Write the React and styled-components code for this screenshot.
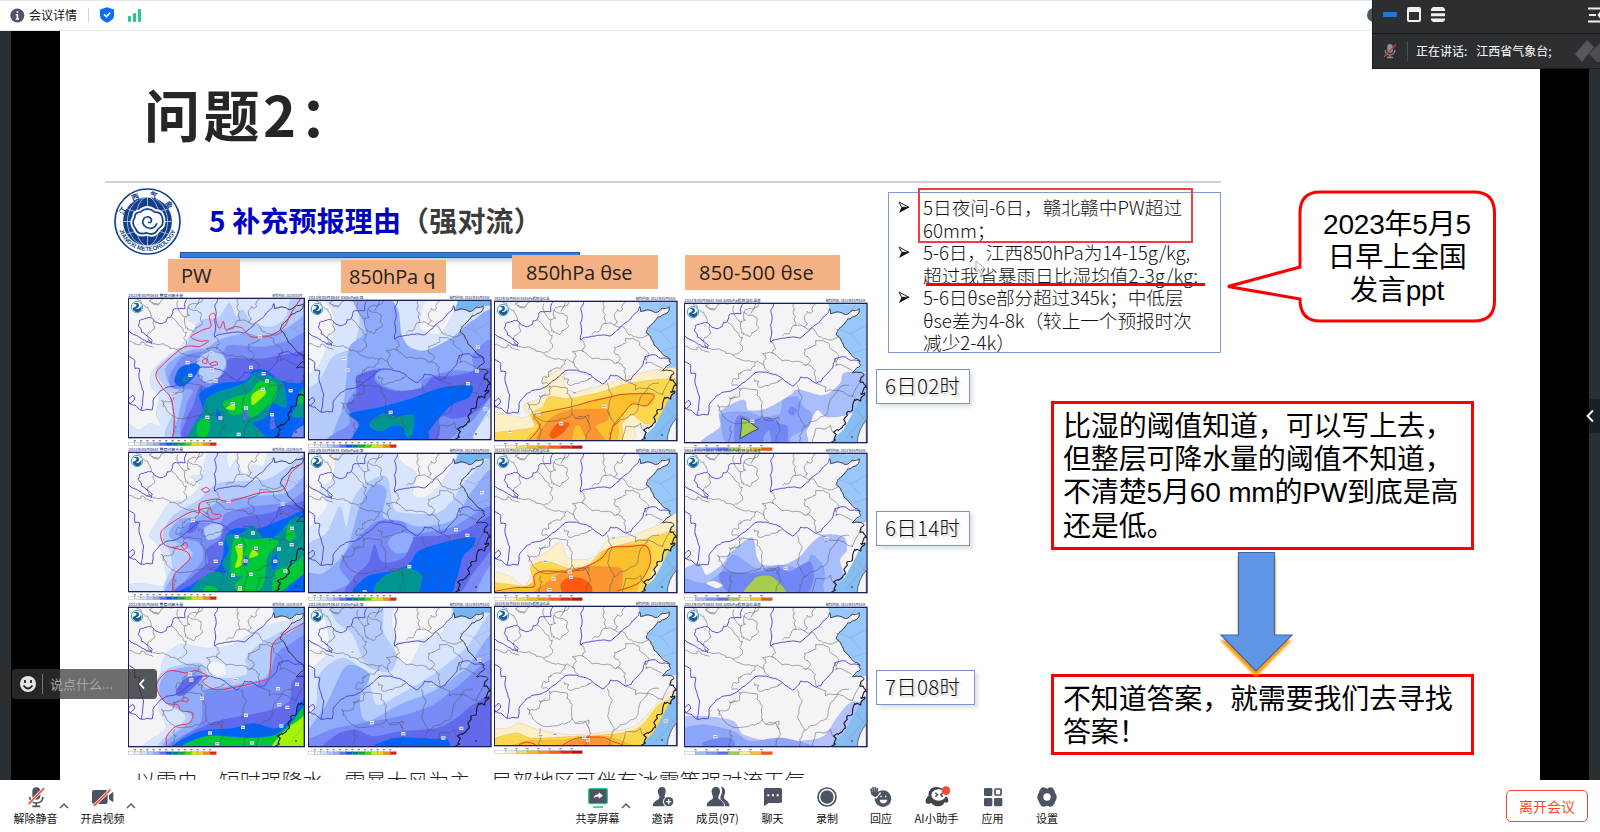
import React from 'react';
import styled, { createGlobalStyle } from 'styled-components';

const CJK = '"Noto Sans CJK SC", sans-serif';
const ARIAL = '"Liberation Sans", "Noto Sans CJK SC", sans-serif';

const Global = createGlobalStyle`
  * { box-sizing: border-box; }
  html, body { margin: 0; padding: 0; }
  body { width: 1600px; height: 832px; overflow: hidden; background: #fff; font-family: ${CJK}; }
  svg { display: block; }
`;

const Window = styled.div`
  width: 1600px;
  height: 832px;
  display: flex;
  flex-direction: column;
  position: relative;
  overflow: hidden;
  background: #fff;
`;

/* ---------- top bar ---------- */
const TopBar = styled.header`
  height: 31px;
  flex: none;
  border-top: 1px solid #e6e8ef;
  border-bottom: 1px solid #e6e8f1;
  display: flex;
  align-items: center;
  padding: 0 0 1px 10px;
  font-size: 12px;
  color: #111;
`;
const TopLabel = styled.span`
  margin-left: 4px;
  line-height: 16px;
`;
const TopDivider = styled.i`
  width: 1px;
  height: 14px;
  background: #d4d7df;
  margin: 0 11px;
`;
const Bars = styled.div`
  display: flex;
  align-items: flex-end;
  gap: 2px;
  height: 13px;
  margin-left: 14px;
`;
const Bar = styled.i`
  width: 3px;
  height: ${(p) => p.$h}px;
  background: #26c98c;
  border-radius: 1px;
`;
const HiddenInfo = styled.i`
  width: 14px;
  height: 14px;
  border-radius: 50%;
  background: #4e5566;
  margin-left: 1226px;
`;

/* ---------- stage ---------- */
const Stage = styled.main`
  height: 749px;
  flex: none;
  display: flex;
  background: #000;
  border-left: 11px solid #2b2f32;
  border-right: 11px solid #2b2f32;
  padding: 0 49px;
`;
const Slide = styled.section`
  width: 1480px;
  height: 749px;
  background: #fff;
  overflow: hidden;
`;
const SlideTitle = styled.h1`
  margin: 0;
  height: 150px;
  padding: 40px 0 0 84px;
  font: 700 56px/84px ${CJK};
  letter-spacing: 3.5px;
  color: #262626;
  white-space: nowrap;
`;
const Rule = styled.div`
  width: 1116px;
  height: 2px;
  margin-left: 45px;
  background: #d2d2d2;
`;
const Body = styled.div`
  display: flex;
`;
const Left = styled.div`
  width: 807px;
  flex: none;
`;
const Head = styled.div`
  display: flex;
  height: 67px;
  margin: 5px 0 0 54px;
`;
const HeadText = styled.div`
  display: flex;
  flex-direction: column;
`;
const Heading = styled.h2`
  margin: 12px 0 0 28px;
  font: 700 28px/40px ${CJK};
  letter-spacing: 0.15px;
  color: #0000c4;
  white-space: nowrap;
`;
const HeadingNote = styled.span`
  color: #3c3c3c;
`;
const BlueBar = styled.div`
  width: 400px;
  height: 6px;
  margin: auto 0 -3px -1px;
  flex: none;
  background: #2c7fdc;
  border: 1px solid #2f5597;
  box-shadow: 0 3px 4px rgba(90, 100, 130, 0.35);
`;
const Tags = styled.div`
  display: flex;
  align-items: flex-start;
  height: 38px;
  position: relative;
`;
const Tag = styled.div`
  width: ${(p) => p.$w}px;
  height: ${(p) => p.$h}px;
  margin: ${(p) => p.$top}px 0 0 ${(p) => p.$left}px;
  padding-left: ${(p) => p.$pad}px;
  background: #f4b183;
  color: #222;
  font: 400 20px/${(p) => p.$h + 1}px "Open Sans", ${CJK};
  letter-spacing: ${(p) => p.$ls || 0}px;
  white-space: nowrap;
`;
const Maps = styled.div`
  display: grid;
  grid-template-columns: 180px 186px 189px 184px;
  grid-template-rows: 154.4px 154.9px 154px;
  padding-left: 68.4px;
`;
const MapCell = styled.div`
  margin-top: ${(p) => p.$dy}px;
  margin-left: ${(p) => p.$dx || 0}px;
`;
const Caption = styled.p`
  margin: 10px 0 0 75px;
  font: 300 21px/28px ${CJK};
  letter-spacing: -0.05px;
  color: #222;
  white-space: nowrap;
`;

const Right = styled.div`
  width: 673px;
  flex: none;
`;
const TopRow = styled.div`
  display: flex;
  margin: 9px 0 0 21px;
`;
const Notes = styled.ul`
  position: relative;
  width: 333px;
  height: 161px;
  margin: 0;
  padding: 3px 0 0 34px;
  border: 1px solid #7f9bd3;
  list-style: none;
  font: 300 18.7px/22.5px ${CJK};
  color: #111;
`;
const Note = styled.li`
  position: relative;
  white-space: nowrap;
`;
const NoteLine = styled.div`
  height: 22.5px;
  letter-spacing: ${(p) => p.$ls || 0}px;
`;
const Bullet = styled.svg`
  position: absolute;
  left: -25px;
  top: 5px;
`;
const RedFrame = styled.div`
  position: absolute;
  left: 29px;
  top: -5px;
  width: 275px;
  height: 55px;
  border: 2px solid #ef3e3e;
`;
const RedLine = styled.div`
  position: absolute;
  left: 37px;
  top: 90px;
  width: 279px;
  height: 3px;
  background: #fb0000;
`;
const Pointer = styled.svg`
  position: absolute;
  left: 86px;
  top: 67px;
`;
const Callout = styled.div`
  position: relative;
  width: 273px;
  height: 134px;
  margin: -3px 0 0 3px;
  padding: 19px 3px 0 76px;
  font: 400 28px/33.2px ${ARIAL};
  letter-spacing: -0.2px;
  color: #000;
  text-align: center;
  white-space: nowrap;
`;
const CalloutShape = styled.svg`
  position: absolute;
  left: 0;
  top: 0;
`;
const CalloutLine = styled.div`
  position: relative;
`;
const LowerRow = styled.div`
  display: flex;
  margin-left: 9px;
`;
const Times = styled.div`
  width: 175px;
  padding-top: 16px;
`;
const Time = styled.div`
  width: ${(p) => p.$w}px;
  height: 35px;
  margin-bottom: ${(p) => p.$gap}px;
  padding-left: 8px;
  border: 1px solid #7793d0;
  background: #fff;
  box-shadow: 3px 3px 4px rgba(120, 120, 120, 0.22);
  text-shadow: 2px 2px 2px rgba(120, 120, 120, 0.35);
  font: 300 20.5px/31px ${CJK};
  letter-spacing: 0.3px;
  color: #111;
  white-space: nowrap;
`;
const Conclusions = styled.div`
  padding-top: 48px;
`;
const RedBox = styled.div`
  width: 423px;
  height: ${(p) => p.$h}px;
  border: 3px solid #fb0000;
  padding: 6px 0 0 9px;
  font: 400 28px/33.2px ${ARIAL};
  letter-spacing: -0.17px;
  color: #000;
  white-space: nowrap;
`;
const ArrowSvg = styled.svg`
  margin-left: 163px;
  overflow: visible;
`;

/* ---------- overlays ---------- */
const Speaker = styled.aside`
  position: absolute;
  right: 0;
  top: 0;
  width: 228px;
  height: 69px;
  background: #2b2f32;
  border-left: 1px solid #1b1d1f;
  border-bottom: 1px solid #1b1d1f;
  overflow: hidden;
`;
const SpeakerTop = styled.div`
  height: 34px;
  display: flex;
  align-items: center;
  padding: 0 0 4px 10px;
  gap: 10px;
  border-bottom: 1px solid #16181a;
`;
const Dash = styled.i`
  width: 14px;
  height: 5px;
  border-radius: 1px;
  background: #1b78dc;
`;
const SpeakerRow = styled.div`
  display: flex;
  align-items: center;
  height: 33px;
  padding-left: 10px;
  font-size: 12px;
  color: #fff;
  white-space: nowrap;
`;
const SpeakerDivider = styled.i`
  width: 1px;
  height: 20px;
  background: #4c5054;
  margin: 0 8px 0 10px;
`;
const SpeakerName = styled.span`
  margin-left: 9px;
  width: 88px;
`;
const PushRight = styled.div`
  margin-left: auto;
`;
const ChatBar = styled.div`
  position: absolute;
  left: 12px;
  top: 669px;
  width: 145px;
  height: 30px;
  border-radius: 4px;
  display: flex;
  align-items: center;
  background: rgba(50, 52, 54, 0.72);
  overflow: hidden;
  color: #a8a8a8;
  font-size: 13px;
`;
const ChatInput = styled.div`
  width: 85px;
  flex: none;
  border-left: 1px solid #77797b;
  height: 20px;
  line-height: 20px;
  margin-left: -2px;
  padding-left: 7px;
  white-space: nowrap;
`;
const ChatToggle = styled.div`
  flex: 1;
  height: 30px;
  display: flex;
  align-items: center;
  justify-content: center;
  padding-right: 2px;
  border-left: 1px solid rgba(150, 150, 150, 0.5);
  background: rgba(40, 42, 44, 0.3);
`;
const SideTab = styled.div`
  position: absolute;
  right: 0;
  top: 399px;
  width: 11px;
  height: 34px;
  background: #1d2022;
`;
const SideChevron = styled.svg`
  margin: 10px 0 0 -4px;
  overflow: visible;
`;

/* ---------- toolbar ---------- */
const Toolbar = styled.footer`
  height: 52px;
  flex: none;
  display: flex;
  background: #fff;
  padding-left: 2px;
`;
const Tool = styled.div`
  position: relative;
  width: ${(p) => p.$w}px;
  flex: none;
  display: flex;
  flex-direction: column;
  align-items: center;
  padding-top: 6px;
  margin-left: ${(p) => p.$ml || 0}px;
`;
const ToolLabel = styled.span`
  margin-top: 2px;
  font: 400 ${(p) => (p.$latin ? 11.3 : 11)}px/16px ${CJK};
  color: #111;
  white-space: nowrap;
`;
const Caret = styled.svg`
  position: absolute;
  left: calc(50% + 23px);
  top: 22px;
`;
const Leave = styled.button`
  width: 82px;
  height: 32px;
  margin: 10px 12px 0 auto;
  padding: 0;
  border: 1px solid #ee4a33;
  border-radius: 5px;
  background: #fff;
  color: #fa4a2e;
  font: 400 14px/28px ${CJK};
`;

/* ---------- weather maps ---------- */
const rand = (seed) => {
  let s = seed;
  return () => {
    s = (s * 16807) % 2147483647;
    return s / 2147483647 - 0.5;
  };
};

// Subdivides a polyline and shakes the midpoints, so borders look surveyed.
const rough = (pts, amp, seed = 7) => {
  const r = rand(seed * 7919);
  let out = pts;
  for (let k = 0; k < 2; k += 1) {
    const next = [out[0]];
    for (let i = 1; i < out.length; i += 1) {
      const [x0, y0] = out[i - 1];
      const [x1, y1] = out[i];
      const a = amp / (k + 1);
      next.push([(x0 + x1) / 2 + r() * a, (y0 + y1) / 2 + r() * a], out[i]);
    }
    out = next;
  }
  return 'M' + out.map((p) => p[0].toFixed(1) + ' ' + p[1].toFixed(1)).join('L');
};

const smooth = (pts, closed) => {
  const n = pts.length;
  const at = (i) => (closed ? pts[(i + n) % n] : pts[Math.max(0, Math.min(n - 1, i))]);
  let d = `M${pts[0].join(' ')}`;
  for (let i = 0; i < (closed ? n : n - 1); i += 1) {
    const [a, b, c, e] = [at(i - 1), at(i), at(i + 1), at(i + 2)];
    d += `C${b[0] + (c[0] - a[0]) / 7} ${b[1] + (c[1] - a[1]) / 7} ${c[0] - (e[0] - b[0]) / 7} ${c[1] - (e[1] - b[1]) / 7} ${c[0]} ${c[1]}`;
  }
  return d + (closed ? 'Z' : '');
};

const P = (s) => s.split(' ').map((t) => t.split(',').map(Number));

const rivers = [
  '192,66 188,72 186,95 160,95 150,100 145,118 133,122 128,135 110,140 92,130 85,122 65,125 50,130 46,145 55,165 75,178 88,190 86,200 70,195 55,185 40,175 16,160',
  '284,66 275,85 280,110 274,130 278,150 275,180 290,172 320,168 340,165 365,168 380,155 395,140 415,125 430,108 445,95 452,80',
  '16,238 35,250 36,275 50,275 50,310 62,345 58,385 55,400 88,398 90,370 100,355 115,340 135,330 160,325 185,308 210,290 228,272 262,270 290,278 310,290 340,312 355,300 365,285 385,287 410,303 425,300 440,280 462,255 468,230 500,225 520,235 545,238',
  '16,365 30,355 35,368 22,380 16,378',
  '16,380 36,384 55,400',
].map((s, i) => rough(P(s), 5, 11 + i));

const borders = [
  '40,66 55,85 75,95 85,120', '85,75 110,80 115,70 150,66', '88,66 85,75 108,84',
  '145,118 165,140 180,155 190,165 183,185 188,205 165,220 140,210 120,200 90,200 70,195',
  '85,195 75,170 95,155 92,130', '16,190 35,200 60,195 75,205 90,212',
  '165,70 165,95 185,120 188,155', '185,120 200,115 195,90 215,100 235,115 238,140 220,150 210,165 195,155 190,150',
  '240,66 215,95', '230,66 222,82 195,90', '345,66 342,85 350,105 348,130 330,155 310,162',
  '348,130 375,135 385,125 375,105 385,90 400,85 410,66', '375,135 400,140 420,165 440,170 478,165',
  '275,180 290,200 285,215 300,228 330,235 350,238 380,250 400,255 405,270 412,300',
  '285,215 250,215 262,230 255,250 270,270', '165,220 190,235 230,240 255,250',
  '230,240 215,265 185,270 180,290 165,290 160,310 180,315 185,325',
  '380,250 395,235 375,215 385,200 405,190 410,175 440,180 455,200 475,215 470,240',
  '225,290 240,300 235,310 270,310 300,295 310,290',
  '180,325 205,320 235,325 240,345 250,360 248,395 262,415 300,405 300,430',
  '170,340 150,370 135,375 115,370 120,390', '355,310 370,345 360,380 365,410 375,435 420,410 440,400 455,350 475,325 510,310',
  '475,325 500,335 520,345 550,290', '250,400 220,415 170,425 130,400 120,380', '150,480 160,450 155,430',
  '262,415 290,410 305,445 290,480', '375,435 362,460 365,482', '185,325 178,345 150,345', '400,480 410,440 455,430 470,455',
  '468,230 470,250 500,255 520,265', '410,303 430,310 440,330 475,325',
].map((s, i) => rough(P(s), 13, 31 + i));

const coast = rough(P('452,80 455,95 480,90 500,98 520,85 540,80 538,95 520,105 500,120 480,140 472,158 485,170 495,195 515,215 540,235 545,250 520,272 540,272 555,280'), 7, 91);
const coastSouth = rough(P('555,280 552,300 557,315 545,335 548,345 530,355 520,385 505,400 498,425 478,445 470,460 450,482'), 22, 97);
const seaNorth = rough(P('448,66 562,66 562,270 520,272 545,250 540,235 515,215 495,195 485,170 472,158 480,140 500,120 520,105 538,95 540,80 520,85 500,98 480,90 455,95 452,80'), 2, 3) + 'Z';
const seaSouth = 'M562 330L545 345 520 395 495 440 470 465 462 482H562Z';

const captions = ['整层可降水量', '850hPa比湿', '850hPa假相当位温', '850-500hPa假相当位温差'];
const scales = [
  ['#fff', '#e4edfe', '#cfdefd', '#b2c8fc', '#8fa9fb', '#6371ee', '#0057f0', '#00827c', '#00a848', '#40d800', '#c8f000', '#ffd000', '#f88a00', '#e82010'],
  ['#fff', '#fbf2c8', '#fdd94a', '#fbb524', '#fb8a26', '#fb5a10', '#e02a10', '#c80a10'],
  ['#fff', '#a5bcfc', '#7a94f8', '#5a6fe8', '#a0c850', '#f0f0a0', '#f8c030', '#f05a10'],
];

const pale = '#d9e5fd';
const light = '#b6ccfc';
const mid = '#8fabfb';
const deep = '#788bf7';
const violet = '#6169ec';
const blue = '#0063f8';
const teal = '#00968f';
const green = '#00c836';
const lime = '#a2f400';
const cream = '#fdf0c6';
const yellow = '#fdd74e';
const amber = '#fbc02e';
const orange = '#fb9630';
const fire = '#fb5a10';
const grey = '#f4f4f7';

const maps = [
  {
    o: [27, 55], k: 0, dy: 0,
    f: [
      [pale, '215,50 200,110 230,140 200,180 170,210 130,240 95,280 95,320 120,350 110,400 125,440 90,430 60,450 20,430 20,490 590,490 590,40 230,40'],
      [light, '300,110 250,120 215,160 200,200 150,230 110,270 130,310 150,350 160,400 165,490 590,490 590,40 520,50 500,110 460,140 400,130 370,90 350,110 330,70'],
      [mid, '590,120 500,145 430,170 380,160 300,180 260,205 200,215 140,260 150,310 190,340 180,400 190,490 590,490'],
      [deep, '590,170 500,185 430,200 330,195 310,215 250,215 190,230 150,290 160,325 220,330 200,380 210,490 590,490'],
      [violet, '590,220 540,215 430,235 330,235 320,270 270,320 240,320 220,380 200,420 215,490 590,490'],
      [light, '235,235 270,215 310,225 320,255 300,290 270,310 245,295 235,265'],
      [blue, '165,305 180,265 220,250 242,260 225,290 190,320'],
      [blue, '240,340 300,310 380,300 400,270 440,270 480,300 540,310 555,300 590,340 590,490 240,490 215,470 225,430 250,390'],
      [teal, '250,400 260,360 300,335 350,320 390,300 400,280 440,285 490,310 500,380 460,370 440,410 400,430 420,450 430,490 215,490 220,440'],
      [teal, '590,310 545,330 530,380 520,410 590,400'],
      [green, '310,370 350,350 390,340 420,305 470,310 465,360 440,380 400,412 370,400 340,405'],
      [green, '238,475 235,430 265,415 272,440 258,475'], [green, '590,340 555,330 540,370 590,380'],
      [lime, '398,375 398,345 430,325 440,340 415,365'], [lime, '320,385 345,370 345,390'],
      [teal, '188,300 205,288 212,292 198,306'], [blue, '290,410 292,385 305,400 300,425'], [violet, '372,415 376,385 385,400 384,418'], [violet, '452,445 458,400 468,440'],
      [deep, '520,480 530,450 580,430 580,490'],
    ],
    red: ['160,472 165,420 155,355 130,325 110,290 120,265 180,210 210,198 240,200 268,183 240,183 215,170 250,150 275,140 270,110 285,100 292,130 302,145 312,124 320,150 345,140 370,145 395,170 450,168 495,140 515,100 545,55', '250,240 262,236 262,250 250,248 250,240', '272,250 290,245 294,254 276,256 272,250'],
    n: '276,219 205,248 213,286 278,270 289,303 160,345 395,262 433,281 443,303 431,328 340,371 380,384 264,412 303,414 458,404 514,332 422,170 358,463',
  },
  {
    o: [566, 60], k: 1, dy: 2, bg: pale,
    f: [
      [grey, '550,50 605,50 640,100 645,150 620,210 600,250 570,280 550,260'], [grey, '925,50 1010,50 1000,100 960,160 905,150 900,120'],
      [light, '640,50 700,50 720,120 700,200 640,230 600,300 550,350 550,490 680,490 760,400 800,250 760,50'],
      [mid, '700,50 800,50 835,90 845,160 870,200 920,210 1000,170 1060,120 1130,110 1130,490 690,490 640,470 670,380 680,300 690,200 740,150'],
      [deep, '1130,190 1060,220 1060,270 1000,270 930,290 880,310 830,330 790,300 780,265 712,285 712,320 680,375 690,430 640,490 1130,490'],
      [mid, '765,285 800,268 860,270 905,295 900,325 840,330 790,315'],
      [violet, '680,375 710,350 712,290 770,268 765,300 800,325 850,332 910,320 940,290 1010,285 1130,262 1130,330 1060,400 1000,415 960,410 940,490 700,490 718,440'],
      [blue, '690,400 780,380 870,355 970,320 1055,315 1050,350 1000,372 970,400 930,450 910,490 708,490 718,430'],
      [teal, '750,430 790,400 830,410 880,405 880,450 865,474 850,440 820,435 790,450 765,448'],
      [mid, '1130,340 1090,380 1060,420 1010,460 990,490 1130,490'], [pale, '1130,360 1100,400 1060,470 1090,490 1130,440'],
    ], n: '673,234 684,269 1045,310 813,396 1075,200 1072,272 1097,386',
  },
  {
    o: [16, 64], k: 2, dy: 3, sea: 1,
    f: [
      [cream, '10,400 60,405 105,412 150,395 110,395 110,370 170,350 160,310 180,285 225,268 235,320 260,335 360,310 430,285 570,266 570,370 520,440 490,440 440,440 400,490 0,490'],
      [grey, '225,285 280,280 320,300 300,325 255,335 228,320'],
      [yellow, '0,462 80,450 135,440 125,400 160,380 180,350 240,355 340,335 420,310 570,298 570,365 480,432 430,405 400,430 370,490 0,490'],
      [amber, '135,410 250,385 300,365 400,345 490,340 485,375 430,370 390,420 365,490 120,490 150,440'],
      [orange, '150,490 180,420 250,390 355,390 355,420 320,440 340,490'], [fire, '182,465 205,432 240,430 225,455 195,475'],
      [amber, '250,490 255,445 270,435 285,460 290,490'],
    ],
    red: ['120,482 152,440 135,410 150,400 250,380 300,365 360,352 400,343 490,342 488,360 470,378 430,372 400,405 372,440 362,482'], n: '148,401 217,431 346,379 63,454 257,338',
  },
  {
    o: [583, 69], k: 3, dy: 5, sea: 1,
    f: [
      ['#a9befc', '640,495 690,440 690,395 760,358 775,390 830,385 900,345 925,328 1000,345 1050,310 1060,280 1100,275 1150,290 1150,350 1080,400 1010,410 980,390 950,450 930,495'],
      ['#8ca6fb', '720,495 695,430 700,400 770,395 820,410 870,400 880,360 920,350 940,380 965,400 955,440 900,470 890,495'],
      ['#7187f6', '740,495 735,430 750,405 790,420 830,410 870,430 892,440 888,495 850,495 838,450 820,470 815,495'],
      ['#7187f6', '895,395 905,380 920,390 908,405'],
    ], tri: 1, n: '787,423',
  },
  {
    o: [27, 38], k: 0, dy: 0,
    f: [
      [pale, '290,30 250,100 215,110 240,140 200,180 150,190 110,250 90,290 120,320 140,400 135,440 60,430 20,440 20,470 590,470 590,30'],
      [grey, '330,30 440,30 430,80 400,75 375,110 350,60 330,90'],
      [light, '590,50 510,80 440,120 300,130 240,180 160,230 130,290 150,330 160,380 160,470 590,470'],
      [mid, '590,110 500,160 400,170 300,185 240,230 180,240 150,290 220,340 170,400 165,470 590,470'],
      [deep, '590,160 500,190 400,200 320,220 300,250 210,250 180,290 240,310 250,360 200,420 180,470 590,470'],
      [light, '255,265 290,250 310,260 300,290 265,300'],
      [violet, '590,195 450,220 360,235 320,260 300,300 260,330 265,370 220,410 180,470 590,470'], [violet, '205,280 215,250 240,245 225,275'],
      [blue, '590,215 500,235 420,265 350,265 318,290 310,350 290,390 225,430 190,470 590,470'],
      [teal, '220,470 270,400 320,400 310,370 330,330 320,290 370,280 400,255 420,280 440,310 480,280 530,232 590,260 590,330 520,380 480,470'],
      [green, '370,410 335,400 345,300 400,300 450,295 480,310 445,350 430,440 380,460 345,440'], [green, '500,290 510,252 528,290 510,305'],
      [green, '590,320 520,375 470,395 460,460 490,450 590,370'], [green, '250,470 260,440 290,445 290,470'],
      [lime, '347,380 355,350 348,320 368,320 370,370 352,384'], [lime, '390,355 400,330 418,345'], [lime, '350,470 360,440 375,470'],
      [blue, '455,370 470,340 478,370 462,390'], [blue, '372,375 378,350 388,360 382,378'],
    ],
    red: ['160,455 165,405 210,360 200,335 140,318 125,295 130,270 180,235 220,215 240,220 242,190 290,178 330,185 420,160 490,150 515,100 550,70', '240,195 240,215 275,238 300,235 305,225 280,222 272,205 240,210', '246,150 262,143 270,153 256,158 246,150', '185,318 200,308 205,320 195,328 185,318'],
    n: '221,242 304,312 289,365 352,291 401,280 518,266 410,326 363,318 479,328 517,315 379,364 468,365 395,404 341,407 498,394 362,444 328,185 490,193',
  },
  {
    o: [566, 40], k: 1, dy: 0.6, bg: pale,
    f: [
      [grey, '550,30 640,30 640,110 600,150 625,190 600,230 550,260'], [grey, '840,30 1010,30 970,120 920,170 880,165 890,100 850,70'],
      [light, '550,330 620,280 660,200 680,260 700,180 740,130 800,110 820,200 850,220 950,220 1000,180 1040,120 1130,70 1130,470 550,470'],
      [mid, '550,400 610,400 680,330 720,200 760,135 800,150 790,230 850,245 900,260 1000,240 1060,150 1130,100 1130,470 550,470'],
      [deep, '660,380 690,320 770,245 850,245 880,280 1000,260 1130,205 1130,470 640,470 690,430'],
      [mid, '805,310 830,280 880,285 875,330 830,340'],
      [violet, '690,470 705,410 745,370 765,312 788,365 850,355 880,300 890,290 1010,280 1130,222 1130,300 1060,400 990,470'],
      [blue, '710,470 740,410 830,390 870,370 900,330 1000,300 1065,292 1060,320 1030,350 1010,420 970,470'],
      [teal, '765,440 800,405 860,385 900,400 905,420 885,470 780,470'], [mid, '1130,360 1090,410 1070,470 1130,470'],
    ], n: '1009,269 1043,286 869,380 1087,158 735,456',
  },
  {
    o: [16, 42], k: 2, dy: 0.6, sea: 1,
    f: [
      [cream, '0,400 60,410 105,440 130,400 125,370 170,340 215,308 235,355 290,360 325,345 360,300 440,285 520,250 570,223 570,330 510,400 470,470 0,470'],
      [yellow, '0,430 130,440 125,385 170,365 250,390 300,375 340,335 400,315 480,295 570,272 570,320 500,380 480,420 440,470 0,470'],
      [amber, '130,430 140,400 200,392 250,395 310,375 365,325 475,320 482,380 450,430 400,470 0,470 80,450'],
      [orange, '140,470 180,425 260,385 385,385 400,410 370,470'], [fire, '215,435 240,415 280,418 308,440 300,470 230,470'],
    ],
    red: ['18,456 80,445 135,442 135,410 165,395 240,398 300,378 340,355 365,325 420,322 472,320 484,370 450,430 385,455'], n: '194,419 246,414 181,451 242,398 373,296 169,366',
  },
  {
    o: [583, 40], k: 3, dy: 0.6, sea: 1,
    f: [
      ['#a9befc', '570,400 625,370 650,405 700,370 720,340 785,293 800,350 820,375 880,375 930,350 960,315 1000,285 1060,290 1070,330 1050,360 1060,420 1010,470 570,470'],
      ['#8ca6fb', '570,415 640,430 690,400 730,345 800,385 870,375 940,385 965,345 1000,380 1000,430 960,470 570,470'],
      ['#7187f6', '690,420 700,395 780,400 860,385 900,395 960,365 970,420 930,470 740,470'], [grey, '648,430 670,422 698,435 680,445'],
      ['#a8cc50', '760,470 790,420 810,408 850,412 890,470'],
    ], n: '887,385 1010,296',
  },
  {
    o: [387, 38], k: 0, dy: 0, sea: 1,
    f: [
      [pale, '490,200 540,150 620,160 700,150 780,100 880,75 950,60 950,470 450,470 500,400 480,350 480,320'],
      [grey, '640,200 675,210 680,240 650,245 625,220'],
      [light, '470,270 500,225 600,205 640,250 740,240 740,190 780,150 860,105 950,85 950,470 490,470 560,370 500,325'],
      [mid, '480,280 510,230 600,220 620,280 740,265 805,240 820,150 870,115 950,95 950,470 500,470 580,370 500,325'],
      [deep, '625,290 700,285 800,255 830,180 870,150 950,130 950,470 510,470 600,390 610,320'],
      [violet, '530,290 560,250 610,245 570,290 540,305'], [violet, '650,470 540,440 650,380 800,350 870,320 880,260 950,230 950,470'],
      [blue, '530,470 600,410 700,400 760,385 830,400 880,370 905,320 950,290 950,470'],
      [green, '555,470 620,425 750,430 830,420 880,380 905,345 950,310 950,470'], [lime, '815,470 860,405 900,375 950,340 950,470'],
    ],
    red: ['502,455 502,425 530,395 570,385 580,355 545,348 535,330 500,325 475,290 475,260 510,228 560,235 590,228 625,245 610,262 650,285 720,275 800,255 812,235 820,150 860,115 915,84', '545,315 555,308 568,315 560,322 545,315'],
    n: '572,238 576,256 608,311 836,282 840,330 864,338 893,269 740,362 731,398 632,415 654,447 758,445 846,394 708,255',
  },
  {
    o: [926, 38], k: 1, dy: 0, bg: pale, sea: 1,
    f: [
      [grey, '1190,30 1350,30 1330,110 1280,130 1190,140'], [grey, '910,30 970,60 990,160 960,200 910,220'], [grey, '1180,160 1260,140 1225,212'],
      [light, '1000,30 1140,30 1150,110 1190,180 1170,230 1100,210 1060,120 1010,80'],
      [light, '910,400 950,330 960,240 1030,190 1100,240 1130,330 1200,300 1300,240 1400,160 1490,60 1490,470 910,470'],
      [mid, '910,430 980,330 1040,215 1110,240 1080,310 1100,380 1200,330 1300,290 1400,220 1490,120 1490,470 910,470'],
      [deep, '920,470 980,410 1090,385 1200,365 1300,330 1380,270 1490,200 1490,470'],
      [violet, '1000,470 1010,420 1070,405 1120,425 1200,410 1310,400 1370,370 1420,330 1490,305 1490,470'],
      [blue, '1110,470 1180,430 1300,432 1345,435 1330,470'],
    ], n: '1117,384 1211,417 1331,430 1385,401 1059,172 1297,272 1438,196',
  },
  {
    o: [16, 35], k: 2, dy: -1.3, sea: 1,
    f: [
      [cream, '0,408 60,400 90,385 150,405 250,420 400,405 450,385 500,330 550,290 570,300 570,470 0,470'],
      [yellow, '0,438 80,415 130,430 250,425 400,415 460,390 510,330 570,320 570,470 0,470'],
      [amber, '70,470 110,440 230,435 280,427 350,425 400,440 440,470'], [orange, '220,470 250,440 300,428 350,435 380,470'],
    ],
    red: ['220,452 250,435 280,428 340,428 370,440 400,450', '90,450 115,442 140,450'], n: '155,423 285,428 198,419 530,379 297,436',
  },
  {
    o: [583, 38], k: 3, dy: -0.3, sea: 1,
    f: [
      ['#b4c2fc', '570,375 640,365 730,380 760,420 850,440 990,430 1040,370 1080,325 1120,330 1090,390 1040,440 1030,470 570,470'],
      ['#8ca6fb', '570,410 640,390 730,410 780,440 880,430 980,470 570,470'], ['#7187f6', '640,445 690,430 730,435 725,470 650,470'],
    ], n: '676,426',
  },
];

function WeatherMap({ m, i }) {
  const [ox, oy] = m.o;
  const w = m.k === 0 ? 528 : 548;
  const scale = m.k < 2 ? scales[0] : scales[m.k - 1];
  const bw = 264 / scale.length;
  const over = m.bg || m.k === 0;
  return (
    <svg width={(w + 4) / 3} height="154" viewBox={`-1 -16 ${w + 4} 462`}>
      <defs>
        <clipPath id={`frame${i}`}><rect width={w} height="418" /></clipPath>
      </defs>
      <g fontFamily='"Noto Sans CJK SC", sans-serif' fontSize="9.5" fontWeight="500" fill="#2c3c72">
        <text x="0" y="-5" textLength={m.k === 3 ? 230 : 165} lengthAdjust="spacingAndGlyphs">{`2023年05月06日 ${captions[m.k]}`}</text>
        <text x={w - (m.k === 0 ? 96 : 124)} y="-5" textLength={m.k === 0 ? 90 : 120} lengthAdjust="spacingAndGlyphs">{m.k === 0 ? '制作时间: 2023年05月' : '制作时间: 2023年05月05日'}</text>
      </g>
      <g clipPath={`url(#frame${i})`}>
        <rect width="548" height="418" fill={m.bg || grey} />
        {m.sea && !over && (
          <g transform="translate(-16 -64)" fill="#98c8fa"><path d={seaNorth} /></g>
        )}
        {over && <g transform="translate(-16 -64)" fill="#74b6f2"><path d="M448 64L562 64V80L540 80 520 85 500 98 480 90 455 95Z" /></g>}
        <g transform={`translate(${-ox} ${-oy})`}>
          {m.f.map(([c, s], j) => (
            <path key={j} d={smooth(P(s), true)} fill={c} stroke={over ? '#5fb4d8' : '#8a6a9a'} strokeWidth="1" strokeOpacity=".45" />
          ))}
          {m.tri && <path d="M755 413L772 420 805 445 780 458 750 475 754 440Z" fill="#a8cc50" stroke="#26345a" strokeWidth="2.5" />}
        </g>
        <g transform="translate(-16 -64)" fill="none" strokeLinejoin="round">
          {!over && (
            <>
              <path d={seaSouth} fill="#84bdf0" />
              <path d="M562 415Q538 440 534 484H562Z" fill={grey} stroke="#333" strokeWidth="2" />
            </>
          )}
          <path d="M470 140L515 155 562 130M515 155L545 190M500 120L530 66M520 215L562 200M562 400L500 470M530 380L562 420" stroke="#a86fc8" strokeWidth="1.4" opacity=".65" />
          {borders.map((d) => <path key={d} d={d} stroke="#54545e" strokeWidth="1.9" opacity=".8" />)}
          {rivers.map((d) => <path key={d} d={d} stroke="#4a40dc" strokeWidth="2.8" />)}
          <path d={coast} stroke="#23242e" strokeWidth="2.6" />
          <path d={coastSouth} stroke="#1a1b28" strokeWidth="3.4" />
          <path d="M519 462V468" stroke="#222" strokeWidth="3" />
        </g>
        <g transform={`translate(${-ox} ${-oy})`}>
          {(m.red || []).map((s) => (
            <path key={s} d={smooth(P(s), false)} fill="none" stroke={m.k === 0 ? '#ec2c4c' : '#f03a14'} strokeWidth="3" />
          ))}
          {P(m.n).map(([x, y]) => (
            <g key={`${x}-${y}`}>
              <rect x={x - 6} y={y - 5} width="12" height="10" fill="#f2f2fa" />
              <path d={`M${x - 3} ${y - 2}v4m3-4v4m3-4v4`} stroke="#4a4a86" strokeWidth="1.6" />
            </g>
          ))}
        </g>
        <circle cx="26" cy="26" r="17" fill="#f2fafc" stroke="#4fa6c4" strokeWidth="3" />
        <path d="M15 15Q30 10 32 20 33 29 22 30 33 36 39 22 43 38 28 42 14 40 13 29 25 25 25 19Z" fill="#1c5c94" />
      </g>
      <rect x="0" y="0" width={w} height="418" fill="none" stroke="#1f1f5c" strokeWidth="4" />
      <g>
        {scale.map((c, j) => (
          <g key={j}>
            <rect x={j * bw} y="433" width={bw} height="9" fill={c} stroke="#777" strokeWidth=".8" />
            {j > 0 && <rect x={j * bw - 3} y="425" width="7" height="4" fill="#8a8a92" />}
          </g>
        ))}
      </g>
    </svg>
  );
}

/* ---------- icons ---------- */
const INK = '#4c5363';
const Slash = (p) => (
  <g>
    <path d={p.d} stroke="#fff" strokeWidth="9" />
    <path d={p.d} stroke="#fa4b33" strokeWidth="5" strokeLinecap="round" />
  </g>
);

const icons = {
  mic: (
    <>
      <rect x="28" y="4" width="24" height="37" rx="12" fill={INK} />
      <path d="M20 33Q22 51 40 51T60 33" fill="none" stroke={INK} strokeWidth="5" />
      <path d="M40 51V60M28 61H52" stroke={INK} strokeWidth="5" />
      <Slash d="M18 53L62 8" />
    </>
  ),
  video: (
    <>
      <rect x="6" y="12" width="47" height="42" rx="6" fill={INK} />
      <path d="M57 27L70 17V49L57 40Z" fill={INK} />
      <Slash d="M13 58L60 12" />
    </>
  ),
  share: (
    <>
      <rect x="11" y="8" width="56" height="45" rx="4" fill={INK} stroke="#27cc8d" strokeWidth="4" />
      <path d="M26 37Q28 25 41 25V19L54 29 41 38V32Q32 31 26 37Z" fill="#fff" />
      <path d="M24 63H54" stroke="#27cc8d" strokeWidth="5" />
    </>
  ),
  invite: (
    <>
      <path d="M36 3C27 3 23 10 24 19 25 27 29 31 28 36 26 43 9 43 8 61H46L50 34 44 33Q43 29 46 24 51 3 36 3Z" fill={INK} />
      <circle cx="56" cy="47" r="17" fill="#fff" /><circle cx="56" cy="47" r="14" fill={INK} />
      <path d="M48 47H64M56 39V55" stroke="#fff" strokeWidth="4" />
    </>
  ),
  members: (
    <>
      <path d="M48 3C57 3 62 10 60 20 59 28 55 31 57 37 60 43 72 44 74 61H61Q59 48 47 41 44 33 48 27 55 12 48 3Z" fill={INK} />
      <path d="M32 3C23 3 19 10 20 19 21 27 25 31 24 36 22 43 5 43 5 61H58C57 43 42 43 40 36 39 31 43 27 45 19 46 8 41 3 32 3Z" fill={INK} />
    </>
  ),
  chat: (
    <>
      <path d="M17 6H62Q66 6 66 11V46Q66 51 61 51H26L12 61V11Q12 6 17 6Z" fill={INK} />
      <path d="M22 28H28M36 28H42M50 28H56" stroke="#fff" strokeWidth="6" />
    </>
  ),
  record: (
    <>
      <circle cx="39" cy="33" r="27" fill="none" stroke={INK} strokeWidth="5" />
      <circle cx="39" cy="33" r="20" fill={INK} />
    </>
  ),
  react: (
    <>
      <circle cx="45" cy="38" r="25" fill={INK} />
      <path d="M35 41H58Q56 52 46 52T35 41Z" fill="#fff" />
      <path d="M39 29V34M53 29V34" stroke="#fff" strokeWidth="4" />
      <path d="M10 20H28L34 22 24 34Q14 34 10 20Z" fill={INK} stroke="#fff" strokeWidth="7" />
      <path d="M9 9L12 24M15 5L17 22M22 5V21M28 8L27 25M33 19L26 28" stroke={INK} strokeWidth="5" strokeLinecap="round" />
      <path d="M10 20H28L32 23 24 33Q14 34 10 20Z" fill={INK} />
    </>
  ),
  ai: (
    <>
      <path d="M39 3C20 2 12 17 14 29Q3 37 5 50 15 57 21 50 28 61 44 61 58 60 61 49 74 53 73 42 73 34 64 31 67 6 39 3Z" fill="#42444a" />
      <ellipse cx="44" cy="27" rx="22" ry="17" fill="#fff" />
      <path d="M34 20L41 26 34 32M57 20L50 26 57 32" fill="none" stroke="#42444a" strokeWidth="4" />
      <circle cx="66" cy="14" r="13" fill="#fa4b33" />
    </>
  ),
  apps: (
    <>
      <rect x="12" y="6" width="25" height="24" rx="4" fill={INK} />
      <rect x="45" y="9" width="18" height="18" rx="2" fill="none" stroke={INK} strokeWidth="5" />
      <rect x="12" y="36" width="25" height="25" rx="4" fill={INK} />
      <rect x="42" y="36" width="25" height="25" rx="4" fill={INK} />
    </>
  ),
  settings: (
    <path
      fillRule="evenodd"
      fill={INK}
      d="M22 5Q31 2 35 6 39 9 43 6 47 2 56 5L62 16Q62 21 66 24 71 33 66 43 62 46 62 52L55 61Q46 64 42 60 39 58 36 60 31 64 22 61L16 51Q16 46 12 43 7 33 12 24 16 20 16 15ZM39 22A11 11 0 1 0 39 44 11 11 0 1 0 39 22Z"
    />
  ),
};

const tools = [
  { icon: 'mic', label: '解除静音', w: 67, caret: true },
  { icon: 'video', label: '开启视频', w: 67, caret: true },
  { icon: 'share', label: '共享屏幕', w: 75, caret: true, ml: 424 },
  { icon: 'invite', label: '邀请', w: 55 },
  { icon: 'members', label: '成员(97)', w: 55 },
  { icon: 'chat', label: '聊天', w: 55 },
  { icon: 'record', label: '录制', w: 54 },
  { icon: 'react', label: '回应', w: 54 },
  { icon: 'ai', label: 'AI小助手', w: 57 },
  { icon: 'apps', label: '应用', w: 55 },
  { icon: 'settings', label: '设置', w: 54 },
];

function ToolItem({ t }) {
  return (
    <Tool $w={t.w} $ml={t.ml}>
      <svg width="26" height="22" viewBox="0 0 78 66">{icons[t.icon]}</svg>
      <ToolLabel $latin={t.icon === 'members' || t.icon === 'ai'}>{t.label}</ToolLabel>
      {t.caret && (
        <Caret width="10" height="8" viewBox="0 0 10 8"><path d="M1 6L5 2 9 6" fill="none" stroke="#555b68" strokeWidth="1.5" /></Caret>
      )}
    </Tool>
  );
}

function Logo() {
  const c = '#123f8c';
  return (
    <svg width="67" height="67" viewBox="0 0 200 200">
      <defs>
        <path id="arcTop" d="M29 100A71 71 0 0 1 171 100" />
        <path id="arcLow" d="M12 100A88 88 0 0 0 188 100" />
      </defs>
      <circle cx="100" cy="100" r="97" fill="#fff" stroke={c} strokeWidth="5" />
      <circle cx="100" cy="100" r="73" fill={c} />
      <g fill="none" stroke="#dfe8f8" strokeWidth="2">
        <path d="M100 27V173M27 100H173M38 62Q100 90 162 62M38 138Q100 110 162 138" />
        <ellipse cx="100" cy="100" rx="36" ry="73" /><ellipse cx="100" cy="100" rx="60" ry="73" />
      </g>
      <path d="M78 72Q100 52 122 72 142 70 145 92 150 112 132 122 120 144 98 134 72 142 65 122 50 105 62 88 62 72 78 72Z" fill="#fff" stroke="#fff" strokeWidth="16" />
      <path d="M78 72Q100 52 122 72 142 70 145 92 150 112 132 122 120 144 98 134 72 142 65 122 50 105 62 88 62 72 78 72Z" fill="#fff" stroke={c} strokeWidth="5" />
      <path d="M128 105Q120 126 98 118 78 106 90 90 104 80 112 94 112 106 102 102" fill="none" stroke={c} strokeWidth="5" />
      <text fill={c} fontSize="23" fontWeight="700" fontFamily='"Noto Sans CJK SC"' letterSpacing="26"><textPath href="#arcTop" startOffset="16">江西气象</textPath></text>
      <text fill={c} fontSize="18" fontWeight="700" fontFamily='"Liberation Sans"'><textPath href="#arcLow" startOffset="26" textLength="222">JIANGXI METEOROLOGY</textPath></text>
    </svg>
  );
}

const BulletMark = () => (
  <Bullet width="12" height="13" viewBox="0 0 12 13">
    <path d="M1 1L11 6.3 3.6 6.3Z" fill="#fff" stroke="#222" strokeWidth="1" />
    <path d="M3.6 6.3H11.5L1 12Z" fill="#111" />
  </Bullet>
);

export default function App() {
  return (
    <Window>
      <Global />
      <TopBar>
        <svg width="15" height="15" viewBox="0 0 15 15">
          <circle cx="7.3" cy="7.5" r="7" fill="#4e5566" />
          <path d="M7.4 3.2V5M5.8 6.7H7.4V11M5.8 11H9" stroke="#fff" strokeWidth="1.6" fill="none" />
        </svg>
        <TopLabel>会议详情</TopLabel>
        <TopDivider />
        <svg width="14" height="16" viewBox="0 0 14 16">
          <path d="M7 0.3L14 2.6V8.5Q14 13 7 15.8 0 13 0 8.5V2.6Z" fill="#0a6cff" />
          <path d="M4 7.3L6.4 9.6 10.2 5.6" fill="none" stroke="#fff" strokeWidth="1.7" />
        </svg>
        <Bars><Bar $h={6} /><Bar $h={9} /><Bar $h={13} /></Bars>
        <HiddenInfo />
      </TopBar>

      <Stage>
        <Slide>
          <SlideTitle>问题2：</SlideTitle>
          <Rule />
          <Body>
            <Left>
              <Head>
                <Logo />
                <HeadText>
                  <Heading>5 补充预报理由<HeadingNote>（强对流）</HeadingNote></Heading>
                  <BlueBar />
                </HeadText>
              </Head>
              <Tags>
                <Tag $w={72} $h={33} $top={4} $left={108} $pad={13}>PW</Tag>
                <Tag $w={105} $h={33} $top={5} $left={101} $pad={8} $ls={-0.1}>850hPa q</Tag>
                <Tag $w={146} $h={34} $top={0} $left={66} $pad={14} $ls={-0.1}>850hPa θse</Tag>
                <Tag $w={155} $h={35} $top={0} $left={27} $pad={14} $ls={0.2}>850-500 θse</Tag>
              </Tags>
              <Maps>
                {maps.map((m, i) => (
                  <MapCell key={i} $dy={m.dy} $dx={m.k === 3 ? 0.3 : 0}><WeatherMap m={m} i={i} /></MapCell>
                ))}
              </Maps>
              <Caption>以雷电、短时强降水、雷暴大风为主，局部地区可伴有冰雹等强对流天气</Caption>
            </Left>
            <Right>
              <TopRow>
                <Notes>
                  <Note>
                    <BulletMark />
                    <NoteLine>5日夜间-6日，赣北赣中PW超过</NoteLine>
                    <NoteLine>60mm；</NoteLine>
                  </Note>
                  <Note>
                    <BulletMark />
                    <NoteLine $ls={-0.15}>5-6日，江西850hPa为14-15g/kg,</NoteLine>
                    <NoteLine>超过我省暴雨日比湿均值2-3g/kg;</NoteLine>
                  </Note>
                  <Note>
                    <BulletMark />
                    <NoteLine $ls={-0.15}>5-6日θse部分超过345k；中低层</NoteLine>
                    <NoteLine $ls={-0.1}>θse差为4-8k（较上一个预报时次</NoteLine>
                    <NoteLine>减少2-4k）</NoteLine>
                  </Note>
                  <RedFrame />
                  <RedLine />
                  <Pointer width="12" height="16" viewBox="0 0 12 16"><path d="M1 1V12L4 9.5 6 14 8 13 6.2 8.8H10Z" fill="#fff" stroke="#999" strokeWidth=".8" /></Pointer>
                </Notes>
                <Callout>
                  <CalloutShape width="273" height="134" viewBox="0 0 273 134">
                    <path d="M96 3H250Q270.500 3 270.500 24V112Q270.500 132 250 132H96Q76 132 76 110L76 110L4 97.500 76 78V24Q76 3 96 3Z" fill="#fff" stroke="#fb0000" strokeWidth="3" />
                  </CalloutShape>
                  <CalloutLine>2023年5月5</CalloutLine>
                  <CalloutLine>日早上全国</CalloutLine>
                  <CalloutLine>发言ppt</CalloutLine>
                </Callout>
              </TopRow>
              <LowerRow>
                <Times>
                  <Time $w={94} $gap={107}>6日02时</Time>
                  <Time $w={94} $gap={124}>6日14时</Time>
                  <Time $w={99} $gap={0}>7日08时</Time>
                </Times>
                <Conclusions>
                  <RedBox $h={149}>
                    比湿的阈值知道，可以写上去，<br />
                    但整层可降水量的阈值不知道，<br />
                    不清楚5月60 mm的PW到底是高<br />
                    还是低。
                  </RedBox>
                  <ArrowSvg width="84" height="124" viewBox="0 0 84 124">
                    <defs><filter id="soft" x="-20%" y="-20%" width="140%" height="140%"><feGaussianBlur stdDeviation="1.2" /></filter></defs>
                    <path d="M24 8H61.500V90H78L42 127 6 90H24Z" fill="#ff9c10" filter="url(#soft)" />
                    <path d="M24.500 2.500H60.500V85H78L42 121 7 85H24.500Z" fill="#6096e6" stroke="#3f66a4" strokeWidth="1.200" />
                  </ArrowSvg>
                  <RedBox $h={81}>
                    不知道答案，就需要我们去寻找<br />
                    答案！
                  </RedBox>
                </Conclusions>
              </LowerRow>
            </Right>
          </Body>
        </Slide>
      </Stage>

      <Toolbar>
        {tools.map((t) => <ToolItem key={t.icon} t={t} />)}
        <Leave>离开会议</Leave>
      </Toolbar>

      <ChatBar>
        <svg width="32" height="30" viewBox="0 0 32 30">
          <circle cx="16" cy="15" r="8" fill="#e4e4e4" />
          <path d="M13 11V14M19 11V14M11.500 16.500Q16 22.500 20.500 16.500" stroke="#222" strokeWidth="1.800" fill="none" />
        </svg>
        <ChatInput>说点什么...</ChatInput>
        <ChatToggle>
          <svg width="8" height="12" viewBox="0 0 8 12"><path d="M6 1.500L2 6 6 10.500" fill="none" stroke="#fff" strokeWidth="1.800" /></svg>
        </ChatToggle>
      </ChatBar>

      <SideTab>
        <SideChevron width="10" height="14" viewBox="0 0 10 14"><path d="M8 1.500L2.500 7 8 12.500" fill="none" stroke="#fff" strokeWidth="1.800" /></SideChevron>
      </SideTab>

      <Speaker>
        <SpeakerTop>
          <Dash />
          <svg width="14" height="15" viewBox="0 0 14 15"><path d="M2 0H12Q14 0 14 2V13Q14 15 12 15H2Q0 15 0 13V2Q0 0 2 0ZM2 5V13H12V5Z" fill="#f0f0f0" fillRule="evenodd" /></svg>
          <svg width="14" height="15" viewBox="0 0 14 15"><path d="M2 0H12L14 2V4H0V2ZM0 6.200H14V9.200H0ZM0 11.500H14V13L12 15H2L0 13Z" fill="#f0f0f0" /></svg>
          <PushRight>
            <svg width="12" height="16" viewBox="0 0 12 16"><path d="M0 1.500H12M0 14.500H12M1 8H8" stroke="#f0f0f0" strokeWidth="2" /><path d="M12 4.500L9.500 8 12 11.500" fill="#f0f0f0" /></svg>
          </PushRight>
        </SpeakerTop>
        <SpeakerRow>
          <svg width="14" height="16" viewBox="0 0 14 16">
            <rect x="4.300" y="1" width="5.400" height="9" rx="2.700" fill="#8d9094" />
            <path d="M2 7Q2.500 11.800 7 11.800T12 7M7 12V14.500M4 14.500H10" fill="none" stroke="#8d9094" strokeWidth="1.300" />
            <path d="M1 14L13 1.500" stroke="#d83a3a" strokeWidth="1.400" />
          </svg>
          <SpeakerDivider />
          <span>正在讲话:</span>
          <SpeakerName>江西省气象台;</SpeakerName>
          <PushRight>
            <svg width="26" height="24" viewBox="0 0 26 24"><path d="M1 15L13 1 20 8 8 23Z" fill="#55585c" /><path d="M15 15L26 4V23H23Z" fill="#4b4e52" /></svg>
          </PushRight>
        </SpeakerRow>
      </Speaker>
    </Window>
  );
}
